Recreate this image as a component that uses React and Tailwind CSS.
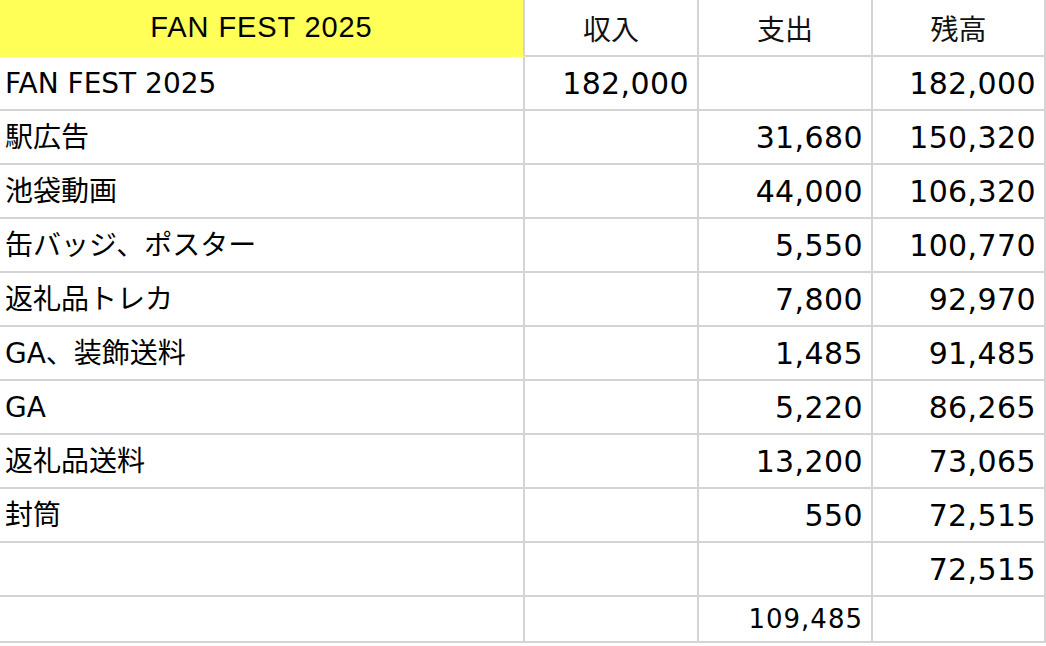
import React from 'react';

const rows = [
  ['FAN FEST 2025', '182,000', '', '182,000'],
  ['駅広告', '', '31,680', '150,320'],
  ['池袋動画', '', '44,000', '106,320'],
  ['缶バッジ、ポスター', '', '5,550', '100,770'],
  ['返礼品トレカ', '', '7,800', '92,970'],
  ['GA、装飾送料', '', '1,485', '91,485'],
  ['GA', '', '5,220', '86,265'],
  ['返礼品送料', '', '13,200', '73,065'],
  ['封筒', '', '550', '72,515'],
  ['', '', '', '72,515'],
];

const cols = 'grid grid-cols-[525px_174px_174px_173px]';
const cell = 'border-r-2 border-b-2 border-[#d4d4d4] flex items-center';
const num = `${cell} justify-end pr-[8px] text-[30px] tracking-[0.4px]`;

const HeaderRow = () => (
  <div className={`${cols} h-[57px]`}>
    <div className="bg-[#ffff57] border-b-2 border-b-[#ffff57] border-r-2 border-r-[#d4d4d4] flex items-center justify-center font-[Liberation_Sans,Arial,sans-serif] text-[29px] tracking-[0.9px] text-black">
      FAN FEST 2025
    </div>
    {['収入', '支出', '残高'].map(h => (
      <div key={h} className={`${cell} justify-center font-[Noto_Sans_CJK_JP,sans-serif] text-[28px] text-[#111]`}>
        {h}
      </div>
    ))}
  </div>
);

const BodyRow = ({ label, income, expense, balance }) => (
  <div className={`${cols} h-[54px] font-[DejaVu_Sans,Noto_Sans_CJK_JP,sans-serif] text-black`}>
    <div className={`${cell} pl-[5px] pt-[2px] text-[28px]`}>{label}</div>
    <div className={num}>{income}</div>
    <div className={num}>{expense}</div>
    <div className={num}>{balance}</div>
  </div>
);

export default function App() {
  return (
    <div className="w-[1046px] h-[646px] overflow-hidden bg-white">
      <HeaderRow />
      {rows.map((r, i) => (
        <BodyRow key={i} label={r[0]} income={r[1]} expense={r[2]} balance={r[3]} />
      ))}
      {/* total row, smaller text */}
      <div className={`${cols} h-[46px] font-[DejaVu_Sans,sans-serif] text-black`}>
        <div className={cell}></div>
        <div className={cell}></div>
        <div className={`${cell} justify-end pr-[8px] text-[26px] tracking-[1px]`}>109,485</div>
        <div className={cell}></div>
      </div>
    </div>
  );
}
